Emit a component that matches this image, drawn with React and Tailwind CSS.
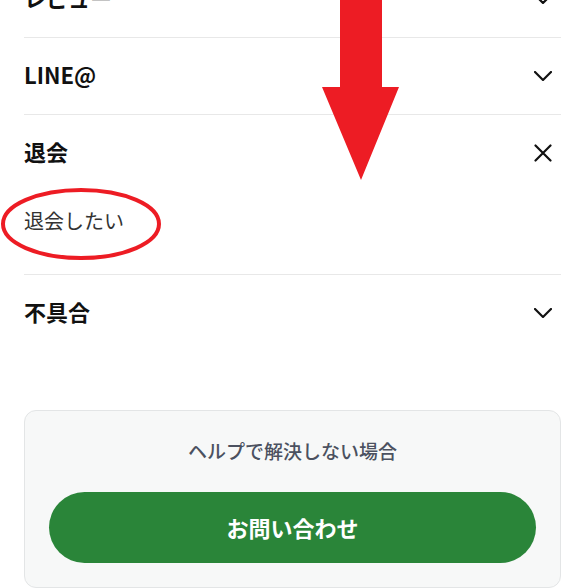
import React from 'react'

const ChevronDown = () => (
  <svg width="18" height="10" viewBox="0 0 18 10" fill="none">
    <path d="M1 1 L9 9 L17 1" stroke="#111" strokeWidth="2.2" strokeLinecap="round" strokeLinejoin="round" />
  </svg>
)

const CloseIcon = () => (
  <svg width="18" height="18" viewBox="0 0 18 18" fill="none">
    <path d="M1.5 1.5 L16.5 16.5 M16.5 1.5 L1.5 16.5" stroke="#111" strokeWidth="2.2" strokeLinecap="round" />
  </svg>
)

function Row({ title, open }) {
  return (
    <div className="h-[76px] flex items-center justify-between">
      <span className="text-[22px] font-bold text-[#111] leading-none pb-[4px]">{title}</span>
      <span className="mr-[9px] flex items-center">{open ? <CloseIcon /> : <ChevronDown />}</span>
    </div>
  )
}

export default function App() {
  return (
    <div
      className="relative w-full h-[588px] overflow-hidden bg-white"
      style={{ fontFamily: '"Noto Sans CJK JP", "Noto Sans", sans-serif' }}
    >
      <div className="px-6 -mt-[39px]">
        {/* FAQ list */}
        <div className="border-b border-[#e8e8e8]">
          <Row title="レビュー" />
        </div>
        <div className="border-b border-[#e8e8e8]">
          <Row title="LINE@" />
        </div>
        <div className="border-b border-[#e8e8e8]">
          <Row title="退会" open />
          <div className="pt-[18px] pb-[41px]">
            <p className="text-[20px] leading-[24px] text-[#333]">退会したい</p>
          </div>
        </div>
        <div>
          <Row title="不具合" />
        </div>

        {/* Contact card */}
        <div className="mt-[59px] bg-[#f7f8f8] border border-[#e3e5e6] rounded-xl px-6 pt-[26px] pb-6">
          <p className="text-center text-[19px] leading-[28px] font-medium text-[#4b5160]">ヘルプで解決しない場合</p>
          <button className="mt-[27px] w-full h-[71px] rounded-full bg-[#2a8539] text-white text-[22px] font-bold">
            お問い合わせ
          </button>
        </div>
      </div>

      {/* annotations */}
      <svg className="absolute left-0 top-0 pointer-events-none" width="585" height="588">
        <polygon points="340,0 382,0 382,87 399,87 361,180 322,87 340,87" fill="#ed1c24" />
        <ellipse cx="81" cy="224" rx="78" ry="34" fill="none" stroke="#ed1c24" strokeWidth="4" />
      </svg>
    </div>
  )
}
